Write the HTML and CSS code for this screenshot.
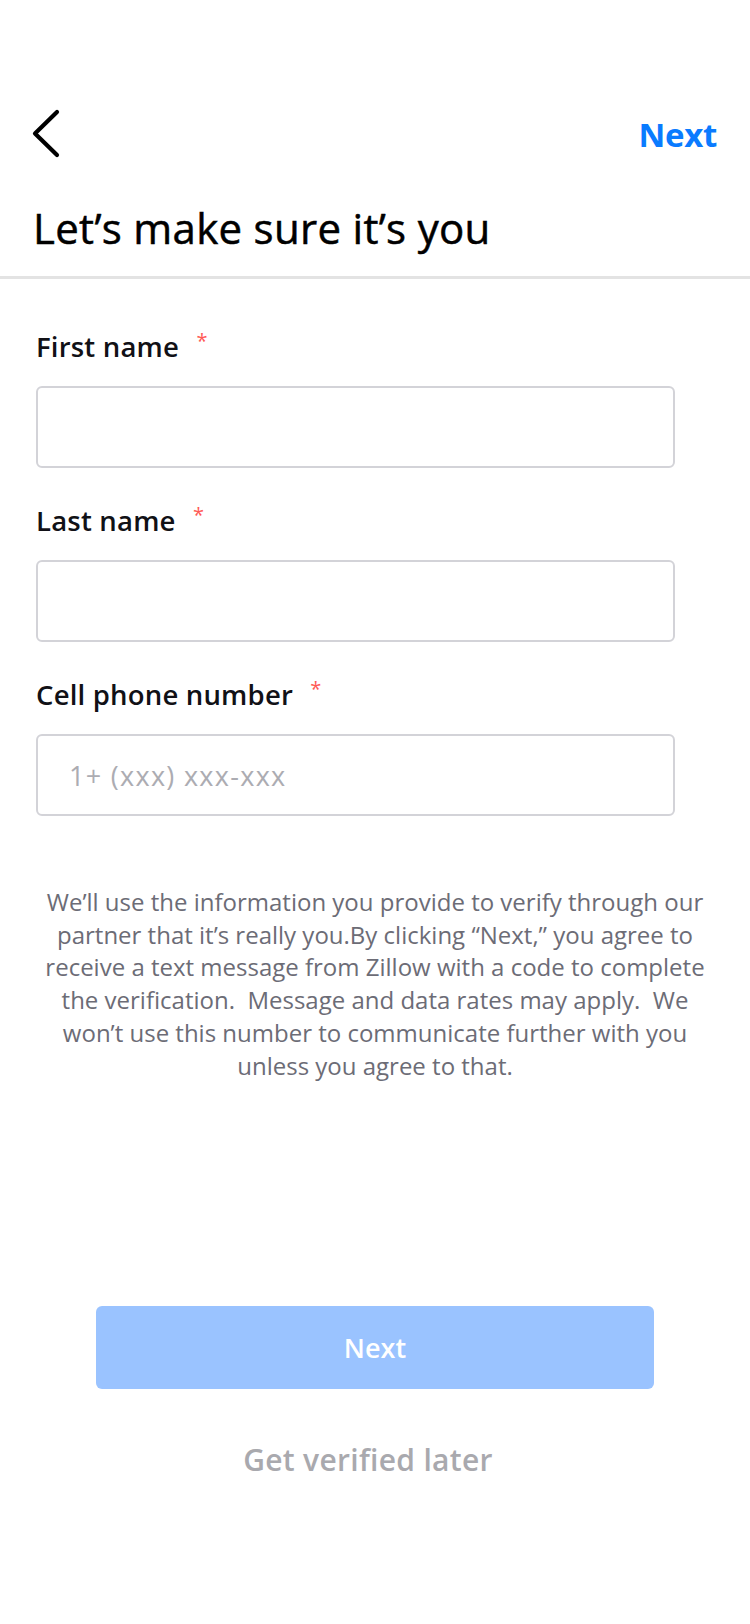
FILE: index.html
```html
<!DOCTYPE html>
<html>
<head>
    <title>Verify</title>
    <link rel="stylesheet" href="styles.css">
</head>
<body>
    <div class="topbar">
        <button type="button" class="back-btn" aria-label="Back">
            <svg width="30" height="50" viewBox="0 0 30 50">
                <path d="M26 3 L4 24.5 L26 46" fill="none" stroke="#000" stroke-width="4.2" stroke-linecap="round" stroke-linejoin="round"/>
            </svg>
        </button>
        <a href="#" class="top-next">Next</a>
    </div>
    <h1 class="title">Let’s make sure it’s you</h1>
    <div class="divider"></div>

    <form id="verifyForm" class="verify-form">
        <div class="field">
            <label for="firstName">First name <span class="req">*</span></label>
            <input type="text" id="firstName">
        </div>
        <div class="field">
            <label for="lastName">Last name <span class="req">*</span></label>
            <input type="text" id="lastName">
        </div>
        <div class="field">
            <label for="phone">Cell phone number <span class="req">*</span></label>
            <input type="tel" id="phone" placeholder="1+ (xxx) xxx-xxx">
        </div>
    </form>

    <p class="notice">
        We’ll use the information you provide to verify through our<br>
        partner that it’s really you.By clicking “Next,” you agree to<br>
        receive a text message from Zillow with a code to complete<br>
        the verification. &nbsp;Message and data rates may apply. &nbsp;We<br>
        won’t use this number to communicate further with you<br>
        unless you agree to that.
    </p>

    <div class="actions">
        <button type="submit" form="verifyForm" class="next-btn" disabled>Next</button>
        <a href="#" class="later-link">Get verified later</a>
    </div>
</body>
</html>
```

FILE: styles.css
```css
body {
    font-family: "Open Sans", "Noto Sans", sans-serif;
    margin: 0;
    padding: 0;
    background-color: #fff;
    color: #111;
}
.topbar {
    display: flex;
    justify-content: space-between;
    align-items: center;
    height: 68px;
    margin-top: 100px;
    padding: 0 33px 0 31px;
}
.back-btn {
    background: none;
    border: none;
    padding: 0;
    width: 30px;
    height: 50px;
    cursor: pointer;
}
.back-btn svg {
    display: block;
}
.top-next {
    color: #0a7bff;
    font-size: 33px;
    font-weight: 700;
    text-decoration: none;
    letter-spacing: -0.3px;
}
.title {
    margin: 36px 0 0 0;
    padding: 0 0 24px 33px;
    font-size: 42px;
    line-height: 48px;
    font-weight: 400;
    letter-spacing: 0.3px;
    color: #000;
    -webkit-text-stroke: 0.5px #000;
}
.divider {
    height: 3px;
    background: #e3e3e3;
}
.verify-form {
    padding: 53px 0 0 36px;
    width: 639px;
    display: flex;
    flex-direction: column;
    gap: 38px;
}
.field {
    display: flex;
    flex-direction: column;
    gap: 24px;
}
.field label {
    font-size: 27.5px;
    line-height: 30px;
    font-weight: 600;
    letter-spacing: 0.2px;
    color: #111116;
}
.req {
    color: #ff5a55;
    font-size: 20px;
    font-weight: 400;
    line-height: 0;
    vertical-align: 9px;
    margin-left: 10px;
}
.field input {
    box-sizing: border-box;
    width: 100%;
    height: 82px;
    border: 2px solid #d3d3d8;
    border-radius: 6px;
    padding: 0 31px;
    font-family: inherit;
    font-size: 27px;
    font-weight: 400;
    letter-spacing: 1.3px;
    color: #222;
    outline: none;
}
.field input::placeholder {
    color: #acacb2;
}
.notice {
    margin: 70px 0 0 0;
    padding: 0 10px;
    text-align: center;
    font-size: 24px;
    line-height: 32.7px;
    color: #6c6c76;
}
.actions {
    margin-top: 224px;
    display: flex;
    flex-direction: column;
    align-items: center;
    gap: 53px;
}
.next-btn {
    width: 558px;
    height: 83px;
    background: #9ac3ff;
    color: #fff;
    border: none;
    border-radius: 6px;
    font-family: inherit;
    font-size: 27px;
    font-weight: 600;
}
.later-link {
    color: #a9a9ae;
    font-size: 30px;
    line-height: 36px;
    font-weight: 600;
    letter-spacing: 0.3px;
    text-decoration: none;
    margin-right: 14px;
}
```
